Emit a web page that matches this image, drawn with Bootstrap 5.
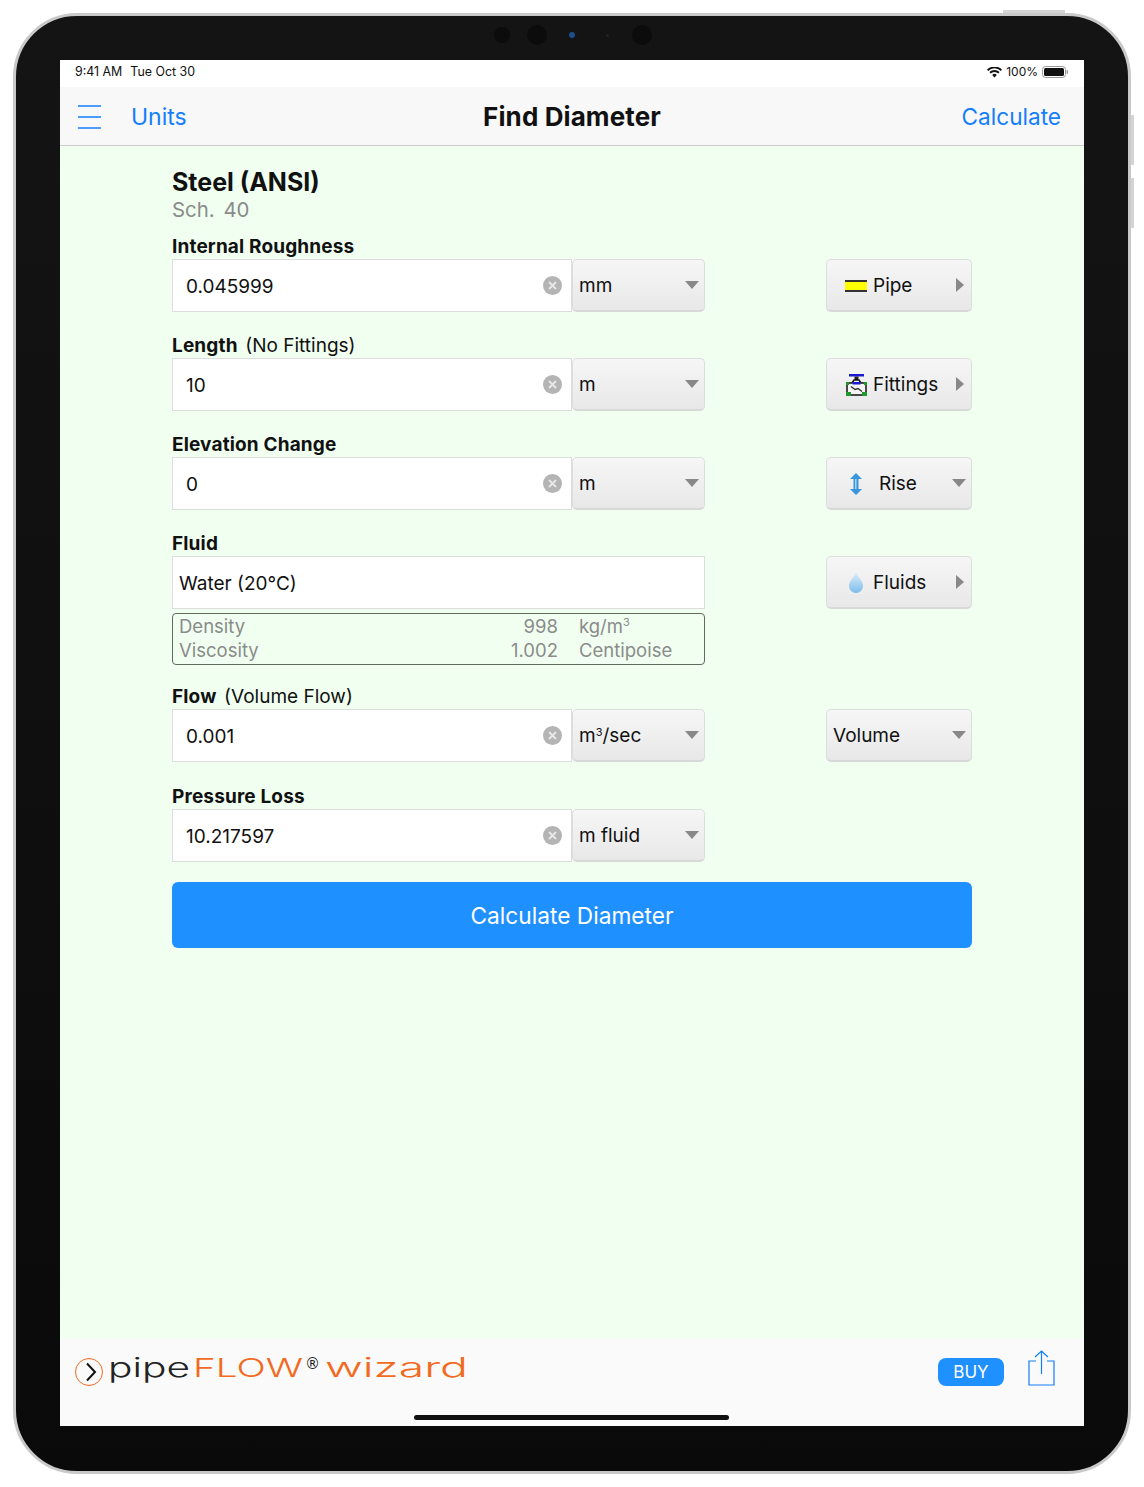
<!DOCTYPE html>
<html lang="en">
<head>
  <meta charset="UTF-8">
  <title>Find Diameter</title>
  <link href="https://cdn.jsdelivr.net/npm/bootstrap@5.3.0/dist/css/bootstrap.min.css" rel="stylesheet">
  <style>
    body { background: #fff; font-family: Inter, "Liberation Sans", sans-serif; color: #111; margin: 0; }
    .tablet { position: relative; width: 1118px; height: 1461px; margin: 13px; padding: 44px; border: 3px solid #c9c9c9; border-radius: 64px; background: linear-gradient(#141414, #0a0a0a); }
    .hw-btn { position: absolute; background: #d4d4d4; }
    .hw-top { top: -6px; left: 987px; width: 62px; height: 3px; }
    .hw-vol1 { top: 99px; right: -6px; width: 3px; height: 50px; }
    .hw-vol2 { top: 162px; right: -6px; width: 3px; height: 50px; }
    .cams { position: absolute; top: 9px; left: 478px; width: 160px; height: 20px; }
    .cam { position: absolute; border-radius: 50%; background: #0c0c0c; }
    .cam-a { left: 0; top: 2px; width: 16px; height: 16px; }
    .cam-b { left: 33px; top: 0; width: 20px; height: 20px; }
    .cam-c { left: 75px; top: 7px; width: 6px; height: 6px; background: #1d4f8c; }
    .cam-d { left: 112px; top: 9px; width: 3px; height: 3px; background: #222; }
    .cam-e { left: 138px; top: 0; width: 20px; height: 20px; }
    .screen { height: 1366px; background: #f0fff0; position: relative; }
    .statusbar { height: 27px; background: #fff; padding: 0 15px 3px; font-size: 12.4px; color: #111; }
    .status-right { font-size: 12px; }
    .topnav { height: 59px; background: #f8f8f8; border-bottom: 1px solid #ccc; padding: 2px 23px 0 18px !important; }
    .nav-side { flex: 1 1 0; }
    .menu-ico { margin-right: 30px; }
    .nav-link-blue { color: #147efb; font-size: 23px; text-decoration: none; }
    .nav-link-end { font-size: 22.6px; }
    .nav-title { font-size: 26px; font-weight: 700; letter-spacing: .1px; margin: -2px 0 0 5px; }
    .sheet { width: 800px; margin: 0 auto; padding-top: 21px; height: 1192px; }
    .pipe-title { font-size: 25px; font-weight: 700; line-height: 30px; }
    .pipe-sub { font-size: 20.400px; line-height: 25px; color: #8b8b8b; word-spacing: 3px; margin-bottom: 13px; }
    .field-label { height: 22px; line-height: 24px; margin-bottom: 2px; font-size: 19px; font-weight: 700; letter-spacing: .15px; }
    .field-label span { font-weight: 400; margin-left: 3px; letter-spacing: 0; }
    .field-row { margin-bottom: 22px; }
    .row-short { margin-bottom: 20px; }
    .row-tall { margin-bottom: 23px; }
    .field-left { width: 533px; }
    .value-box { height: 53px; width: 400px; padding: 3px 9px 0 13px; font-size: 19px; color: #111; background: #fff; border: 1px solid #ddd; border-radius: 0; }
    .value-box.wide { width: 533px; padding-left: 6px; }
    .clear-x { width: 19px; height: 19px; flex: none; margin-top: -4px; }
    .unit-btn, .side-btn { height: 53px; padding: 3px 5px 0 6px; font-size: 19px; color: #111; border: 1px solid #ddd; border-bottom: 2px solid #d8d8d8; border-radius: 5px; background: linear-gradient(#f6f6f6, #e8e8e8); text-align: left; }
    .unit-btn { width: 133px; }
    .side-btn { width: 146px; }
    .unit-btn:hover, .side-btn:hover { color: #111; border-color: #ddd; }
    .caret-down { width: 0; height: 0; flex: none; border-left: 7px solid transparent; border-right: 7px solid transparent; border-top: 8px solid #888; margin-top: -4px; }
    .caret-right { width: 0; height: 0; flex: none; border-top: 7px solid transparent; border-bottom: 7px solid transparent; border-left: 8px solid #888; margin: -3px 2px 0 0; }
    .btn-inner { gap: 6px; margin-left: 12px; }
    .btn-inner-wide { gap: 12px; }
    .ico-slot { width: 22px; flex: none; display: flex; justify-content: center; margin-top: -2px; }
    .pipe-ico { width: 22px; height: 12px; background: #ff0; border-top: 2px solid #333; border-bottom: 2px solid #333; display: block; }
    .info-box { height: 52px; margin-top: 4px; width: 533px; padding: 0 6px 2px; border: 1px solid #5f6b5f; border-radius: 4px; color: #8b8b8b; font-size: 18.5px; line-height: 24px; display: grid; grid-template-columns: 1fr 80px 140px; align-content: center; }
    .info-num { text-align: right; }
    .info-unit { padding-left: 21px; white-space: nowrap; }
    sup.cube { font-size: 11px; top: -0.6em; }
    .calc-btn { width: 800px; height: 66px; margin-top: -2px; padding-top: 8px; font-size: 22.700px; background: #1e90ff; border: 0; border-radius: 6px; color: #fff; }
    .calc-btn:hover { background: #1e90ff; color: #fff; }
    .bottombar { height: 88px; background: #fafafa; padding: 10px 29px 0 15px; }
    .buy-btn { width: 66px; height: 28px; margin: 10px 0 0 1px; padding: 1px 0 0; font-size: 17px; line-height: 27px; background: #1e90ff; color: #fff; border: 0; border-radius: 8px; }
    .buy-btn:hover { background: #1e90ff; color: #fff; }
    .share-ico { margin-top: 2px; }
    .logo-text { font-family: Inter, sans-serif; font-weight: 300; }
    .home-bar { position: absolute; left: 354px; bottom: 6px; width: 315px; height: 5px; border-radius: 3px; background: #111; }
  </style>
</head>
<body>

  <div class="tablet">
    <div class="hw-btn hw-top"></div>
    <div class="hw-btn hw-vol1"></div>
    <div class="hw-btn hw-vol2"></div>

    <!-- front cameras -->
    <div class="cams">
      <div class="cam cam-a"></div>
      <div class="cam cam-b"></div>
      <div class="cam cam-c"></div>
      <div class="cam cam-d"></div>
      <div class="cam cam-e"></div>
    </div>

    <div class="screen d-flex flex-column">
      <!-- Status bar -->
      <div class="statusbar d-flex justify-content-between align-items-center">
        <div class="d-flex gap-2"><span>9:41 AM</span><span>Tue Oct 30</span></div>
        <div class="d-flex align-items-center gap-1 status-right">
          <svg width="15" height="11" viewBox="0 0 15 11"><path d="M7.5 10.5 5.2 8a3.2 3.2 0 0 1 4.6 0zM3.7 6.5 2.4 5.1a7.2 7.2 0 0 1 10.2 0l-1.3 1.4a5.4 5.4 0 0 0-7.6 0zM1.2 3.9 0 2.6a10.6 10.6 0 0 1 15 0l-1.2 1.3a8.9 8.9 0 0 0-12.6 0z" fill="#111"/></svg>
          <span>100%</span>
          <svg width="27" height="12" viewBox="0 0 27 12"><rect x=".5" y=".5" width="23" height="11" rx="3" fill="none" stroke="#999"/><rect x="2" y="2" width="20" height="8" rx="1.5" fill="#111"/><rect x="24.6" y="4" width="1.4" height="4" rx=".7" fill="#999"/></svg>
        </div>
      </div>

      <!-- Navbar -->
      <nav class="navbar topnav d-flex align-items-center flex-nowrap">
        <div class="nav-side d-flex align-items-center">
          <svg width="23" height="24" viewBox="0 0 23 24" class="menu-ico"><path d="M0 1h23M0 12h23M0 23h23" stroke="#147efb" stroke-width="1.5"/></svg>
          <a class="nav-link-blue" href="#">Units</a>
        </div>
        <div class="nav-title">Find Diameter</div>
        <div class="nav-side text-end"><a class="nav-link-blue nav-link-end" href="#">Calculate</a></div>
      </nav>

      <!-- Form -->
      <div class="sheet">
        <div class="pipe-title">Steel (ANSI)</div>
        <div class="pipe-sub">Sch. 40</div>

        <div class="field-label">Internal Roughness</div>
        <div class="field-row d-flex justify-content-between">
          <div class="d-flex field-left">
            <div class="value-box form-control d-flex align-items-center justify-content-between"><span>0.045999</span>
              <svg class="clear-x" viewBox="0 0 19 19"><circle cx="9.5" cy="9.5" r="9.5" fill="#b4b4b4"/><path d="M6 6l7 7M13 6l-7 7" stroke="#e8e8e8" stroke-width="1.8"/></svg></div>
            <button class="btn unit-btn d-flex align-items-center justify-content-between">mm<span class="caret-down"></span></button>
          </div>
          <button class="btn side-btn d-flex align-items-center justify-content-between">
            <span class="d-flex align-items-center btn-inner"><span class="ico-slot"><span class="pipe-ico"></span></span>Pipe</span><span class="caret-right"></span>
          </button>
        </div>

        <div class="field-label">Length <span>(No Fittings)</span></div>
        <div class="field-row d-flex justify-content-between">
          <div class="d-flex field-left">
            <div class="value-box form-control d-flex align-items-center justify-content-between"><span>10</span>
              <svg class="clear-x" viewBox="0 0 19 19"><circle cx="9.5" cy="9.5" r="9.5" fill="#b4b4b4"/><path d="M6 6l7 7M13 6l-7 7" stroke="#e8e8e8" stroke-width="1.8"/></svg></div>
            <button class="btn unit-btn d-flex align-items-center justify-content-between">m<span class="caret-down"></span></button>
          </div>
          <button class="btn side-btn d-flex align-items-center justify-content-between">
            <span class="d-flex align-items-center btn-inner">
              <span class="ico-slot"><svg width="21" height="22" viewBox="0 0 21 22">
                <path d="M3 0h15v2.500H3z" fill="#1a1ad0"/><path d="M8.500 2.500h4V7h-4z" fill="#222"/>
                <path d="M1 9h5l2-3h5l2 3h5v12H1z" fill="#f4f4f4"/>
                <path d="M1 9h5l2-3h5l2 3h5v12H1z" fill="none" stroke="#111" stroke-width="1.500"/>
                <path d="M6.500 8h8v2.500h-8z" fill="#1a1ad0"/>
                <path d="M0 18h5v4H0zM16 18h5v4h-5zM0 8h3v3H0zM18 8h3v3h-3z" fill="#1f9a2a"/>
                <path d="M5 12.500l4 3 3-1 4 3" fill="none" stroke="#333" stroke-width="1.500"/>
              </svg></span>Fittings</span><span class="caret-right"></span>
          </button>
        </div>

        <div class="field-label">Elevation Change</div>
        <div class="field-row d-flex justify-content-between">
          <div class="d-flex field-left">
            <div class="value-box form-control d-flex align-items-center justify-content-between"><span>0</span>
              <svg class="clear-x" viewBox="0 0 19 19"><circle cx="9.5" cy="9.5" r="9.5" fill="#b4b4b4"/><path d="M6 6l7 7M13 6l-7 7" stroke="#e8e8e8" stroke-width="1.8"/></svg></div>
            <button class="btn unit-btn d-flex align-items-center justify-content-between">m<span class="caret-down"></span></button>
          </div>
          <button class="btn side-btn d-flex align-items-center justify-content-between">
            <span class="d-flex align-items-center btn-inner btn-inner-wide">
              <span class="ico-slot"><svg width="12" height="22" viewBox="0 0 12 22"><path d="M6 0l6 6H8.500v10H12l-6 6-6-6h3.500V6H0z" fill="#3a96dc"/><path d="M5 6h1.500v10H5z" fill="#a9d4f2"/></svg></span>Rise</span><span class="caret-down"></span>
          </button>
        </div>

        <div class="field-label">Fluid</div>
        <div class="field-row row-short d-flex justify-content-between">
          <div class="field-left">
            <div class="value-box form-control wide d-flex align-items-center">Water (20°C)</div>
            <div class="info-box">
              <div>Density</div><div class="info-num">998</div><div class="info-unit">kg/m<sup class="cube">3</sup></div>
              <div>Viscosity</div><div class="info-num">1.002</div><div class="info-unit">Centipoise</div>
            </div>
          </div>
          <button class="btn side-btn d-flex align-items-center justify-content-between">
            <span class="d-flex align-items-center btn-inner">
              <span class="ico-slot"><svg width="14" height="21" viewBox="0 0 14 21"><defs><linearGradient id="drop" x1="0" y1="0" x2="0" y2="1"><stop offset="0" stop-color="#dcedf9"/><stop offset="1" stop-color="#7fbcea"/></linearGradient></defs><path d="M7 0c1 5 7 8 7 14a7 7 0 0 1-14 0C0 8 6 5 7 0z" fill="url(#drop)"/></svg></span>Fluids</span><span class="caret-right"></span>
          </button>
        </div>

        <div class="field-label">Flow <span>(Volume Flow)</span></div>
        <div class="field-row row-tall d-flex justify-content-between">
          <div class="d-flex field-left">
            <div class="value-box form-control d-flex align-items-center justify-content-between"><span>0.001</span>
              <svg class="clear-x" viewBox="0 0 19 19"><circle cx="9.5" cy="9.5" r="9.5" fill="#b4b4b4"/><path d="M6 6l7 7M13 6l-7 7" stroke="#e8e8e8" stroke-width="1.8"/></svg></div>
            <button class="btn unit-btn d-flex align-items-center justify-content-between"><span>m<sup class="cube">3</sup>/sec</span><span class="caret-down"></span></button>
          </div>
          <button class="btn side-btn d-flex align-items-center justify-content-between">Volume<span class="caret-down"></span></button>
        </div>

        <div class="field-label">Pressure Loss</div>
        <div class="field-row d-flex justify-content-between">
          <div class="d-flex field-left">
            <div class="value-box form-control d-flex align-items-center justify-content-between"><span>10.217597</span>
              <svg class="clear-x" viewBox="0 0 19 19"><circle cx="9.5" cy="9.5" r="9.5" fill="#b4b4b4"/><path d="M6 6l7 7M13 6l-7 7" stroke="#e8e8e8" stroke-width="1.8"/></svg></div>
            <button class="btn unit-btn d-flex align-items-center justify-content-between">m fluid<span class="caret-down"></span></button>
          </div>
        </div>

        <button class="btn calc-btn">Calculate Diameter</button>
      </div>

      <!-- Footer -->
      <div class="bottombar d-flex justify-content-between align-items-start">
        <svg width="400" height="44" viewBox="0 0 400 44">
          <circle cx="14" cy="24" r="13.500" fill="none" stroke="#f26a21" stroke-width="1"/>
          <path d="M12 15.500l8 8.500-8 8.500" fill="none" stroke="#111" stroke-width="2"/>
          <text class="logo-text" x="33" y="29" font-size="27" fill="#222" textLength="82" lengthAdjust="spacingAndGlyphs">pipe</text>
          <text class="logo-text" x="118" y="29" font-size="26" fill="#f26a21" textLength="110" lengthAdjust="spacingAndGlyphs">FLOW</text>
          <text x="230" y="21" font-family="DejaVu Sans" font-size="15" fill="#222">®</text>
          <text class="logo-text" x="250" y="29" font-size="27" fill="#f26a21" textLength="143" lengthAdjust="spacingAndGlyphs">wizard</text>
        </svg>
        <div class="d-flex align-items-start gap-4">
          <button class="btn buy-btn">BUY</button>
          <svg width="27" height="36" viewBox="0 0 27 36" class="share-ico">
            <path d="M8 11H1v24h25V11h-7M13.500 24V1M7 7l6.500-6L20 7" fill="none" stroke="#147efb" stroke-width="1.2"/>
          </svg>
        </div>
      </div>

      <div class="home-bar"></div>
    </div>
  </div>

  <script src="https://cdn.jsdelivr.net/npm/bootstrap@5.3.0/dist/js/bootstrap.bundle.min.js"></script>
</body>
</html>
